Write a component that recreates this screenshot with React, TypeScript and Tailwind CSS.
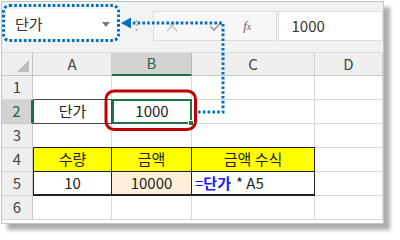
import React from "react";

const font = { fontFamily: '"Noto Sans CJK KR", "Noto Sans", sans-serif' };

function HeaderCell({ label, w, selected }: { label: string; w: string; selected?: boolean }) {
  return (
    <div
      className={`${w} h-[23px] flex items-center justify-center text-[15px] border-r border-b ${
        selected
          ? "bg-[#d3d3d3] text-[#1e6b40] border-r-[#b8b8b8] border-b-2 border-b-[#217346]"
          : "bg-[#efefef] text-[#444] border-r-[#cfcfcf] border-b-[#c8c8c8]"
      }`}
    >
      {label}
    </div>
  );
}

function RowHead({ n, selected }: { n: number; selected?: boolean }) {
  return (
    <div
      className={`w-[31px] h-[24px] flex items-center justify-center text-[15px] border-b ${
        selected
          ? "bg-[#d3d3d3] text-[#1e6b40] border-r-2 border-r-[#217346] border-b-[#c8c8c8]"
          : "bg-[#efefef] text-[#444] border-r border-r-[#c8c8c8] border-b-[#d4d4d4]"
      }`}
    >
      {n}
    </div>
  );
}

function Cell({ w, children, cls = "" }: { w: string; children?: React.ReactNode; cls?: string }) {
  return (
    <div className={`${w} h-[24px] flex items-center justify-center text-[15px] text-[#222] border-r border-b border-[#dadada] ${cls}`}>
      {children}
    </div>
  );
}

export default function App() {
  return (
    <div className="w-[400px] h-[240px] bg-white relative overflow-hidden" style={font}>
      <div className="ml-[1px] mt-[1px] w-[383px] h-[223px] border border-[#c4c4c4] bg-white shadow-[6px_6px_4px_rgba(0,0,0,0.32)] overflow-hidden flex flex-col">
        {/* formula bar */}
        <div className="h-[51px] bg-[#f2f2f2] flex items-start pt-[7px] border-b border-[#dcdcdc]">
          <div className="ml-[4px] w-[114px] h-[30px] bg-white flex items-center justify-between pl-[9px] pr-[9px]">
            <span className="text-[15px] text-[#333]">단가</span>
            <svg width="8" height="5" viewBox="0 0 8 5"><path d="M0 0 L8 0 L4 5 Z" fill="#777" /></svg>
          </div>
          <div className="w-[34px] h-[30px] flex items-center justify-center text-[#aaa] text-[13px]">⋮</div>
          <div className="w-[124px] h-[30px] mt-[2px] bg-[#f7f7f7] border border-[#dedede] flex items-center">
            <svg className="ml-[11px]" width="14" height="14" viewBox="0 0 14 14"><path d="M2 2 L12 12 M12 2 L2 12" stroke="#c4c4c4" strokeWidth="1.4" /></svg>
            <svg className="ml-[30px]" width="14" height="14" viewBox="0 0 14 14"><path d="M1.5 7.5 L5 11 L12.5 3" stroke="#9a9a9a" strokeWidth="1.6" fill="none" /></svg>
            <span className="ml-[20px] text-[13px] italic text-[#666]" style={{ fontFamily: '"Liberation Serif", serif' }}>
              f<span className="text-[10px]">x</span>
            </span>
          </div>
          <div className="w-[106px] h-[30px] mt-[2px] ml-[1px] bg-white border border-[#dedede] flex items-center pl-[13px] text-[15px] text-[#333]">
            1000
          </div>
        </div>
        {/* header row */}
        <div className="flex">
          <div className="w-[31px] h-[23px] bg-[#efefef] border-r border-b border-[#c8c8c8] relative">
            <svg className="absolute right-[3px] bottom-[3px]" width="12" height="12" viewBox="0 0 12 12"><path d="M12 0 L12 12 L0 12 Z" fill="#bdbdbd" /></svg>
          </div>
          <HeaderCell label="A" w="w-[79px]" />
          <HeaderCell label="B" w="w-[80px]" selected />
          <HeaderCell label="C" w="w-[123px]" />
          <HeaderCell label="D" w="w-[68px]" />
        </div>
        {/* row 1 */}
        <div className="flex">
          <RowHead n={1} />
          <Cell w="w-[79px]" />
          <Cell w="w-[80px]" />
          <Cell w="w-[123px]" />
          <Cell w="w-[68px]" />
        </div>
        {/* row 2 */}
        <div className="flex">
          <RowHead n={2} selected />
          <Cell w="w-[79px]" cls="!border-[#4a4a4a] border-t border-l -mt-[1px] h-[25px]">단가</Cell>
          <div className="w-[80px] h-[25px] -mt-[1px] border-2 border-[#217346] relative flex items-center justify-center text-[15px] text-[#222]">
            1000
            <div className="absolute -right-[4px] -bottom-[4px] w-[6px] h-[6px] bg-[#217346] border border-white" />
          </div>
          <Cell w="w-[123px]" />
          <Cell w="w-[68px]" />
        </div>
        {/* row 3 */}
        <div className="flex">
          <RowHead n={3} />
          <Cell w="w-[79px]" />
          <Cell w="w-[80px]" />
          <Cell w="w-[123px]" />
          <Cell w="w-[68px]" />
        </div>
        {/* row 4 */}
        <div className="flex">
          <RowHead n={4} />
          <Cell w="w-[79px]" cls="bg-[#ffff00] !border-[#222] border-t border-l -mt-[1px] h-[25px]">수량</Cell>
          <Cell w="w-[80px]" cls="bg-[#ffff00] !border-[#222] border-t -mt-[1px] h-[25px]">금액</Cell>
          <Cell w="w-[123px]" cls="bg-[#ffff00] !border-[#222] border-t -mt-[1px] h-[25px]">금액 수식</Cell>
          <Cell w="w-[68px]" />
        </div>
        {/* row 5 */}
        <div className="flex">
          <RowHead n={5} />
          <Cell w="w-[79px]" cls="!border-[#222] border-l border-b-2">10</Cell>
          <Cell w="w-[80px]" cls="!border-[#222] bg-[#fdefd9] border-b-2">10000</Cell>
          <Cell w="w-[123px]" cls="!border-[#222] border-b-2 !justify-start pl-[3px]">
            <span className="text-[#1a1aff]">=</span>
            <span className="text-[#1a1aff] font-bold">단가</span>
            <span className="ml-[5px]">* A5</span>
          </Cell>
          <Cell w="w-[68px]" />
        </div>
        {/* row 6 */}
        <div className="flex">
          <RowHead n={6} />
          <Cell w="w-[79px]" />
          <Cell w="w-[80px]" />
          <Cell w="w-[123px]" />
          <Cell w="w-[68px]" />
        </div>
      </div>

      {/* annotations overlay */}
      <svg className="absolute left-0 top-0 pointer-events-none" width="400" height="240" viewBox="0 0 400 240">
        <rect x="3.5" y="5.5" width="115" height="35" rx="6" fill="none" stroke="#0070c0" strokeWidth="3" strokeDasharray="2.6 2.2" />
        <rect x="106" y="91" width="89.5" height="38.5" rx="8" fill="none" stroke="#c00000" strokeWidth="3" />
        <path d="M198 112 L223 112 L223 23 L131 23" fill="none" stroke="#0070c0" strokeWidth="3" strokeDasharray="2.6 2.2" />
        <path d="M121 23 L131 17.5 L131 28.5 Z" fill="#0070c0" />
      </svg>
    </div>
  );
}
